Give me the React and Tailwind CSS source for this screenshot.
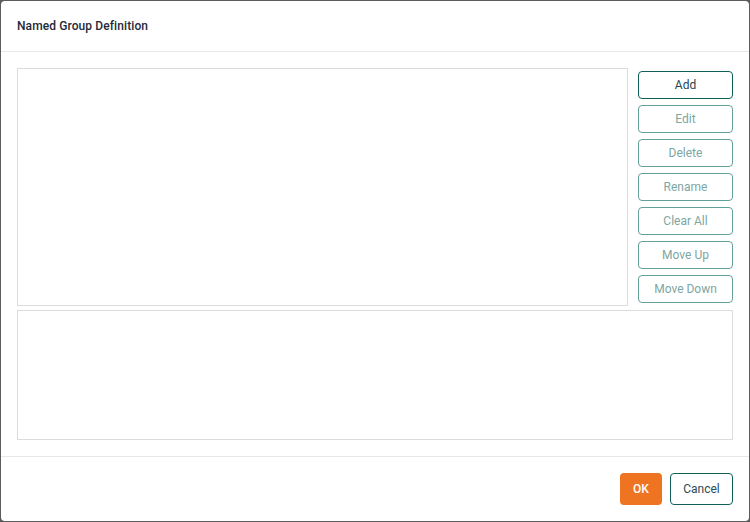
import React from 'react';

const actions = ['Add', 'Edit', 'Delete', 'Rename', 'Clear All', 'Move Up', 'Move Down'];

export default function App() {
    return (
        <div className="w-[750px] h-[522px] bg-[#5c5c5c] pt-px pl-px pr-px pb-px" style={{ fontFamily: 'Roboto, "Noto Sans", sans-serif' }}>
            <div className="h-full bg-white rounded-[4px] flex flex-col overflow-hidden">
                {/* Header */}
                <div className="h-[51px] flex items-center px-4 border-b border-[#e6e8eb] flex-shrink-0">
                    <h2 className="text-[12px] font-medium text-[#1f2937] tracking-[0.1px]">Named Group Definition</h2>
                </div>

                {/* Body */}
                <div className="px-4 pt-4 pb-4 flex flex-col gap-[4px] border-b border-[#e6e8eb]">
                    <div className="flex gap-[10px]">
                        <div className="flex-1 h-[238px] border border-[#dcdcdc]"></div>
                        <div className="w-[95px] pt-[3px] flex flex-col gap-[6px]">
                            {actions.map((label, i) => (
                                <button
                                    key={label}
                                    className={
                                        i === 0
                                            ? 'h-[28px] rounded-[4px] border border-[#0f5f58] text-[12px] text-[#1f4652]'
                                            : 'h-[28px] rounded-[4px] border border-[#62a099] text-[12px] text-[#7ea6a2]'
                                    }
                                >
                                    {label}
                                </button>
                            ))}
                        </div>
                    </div>
                    <div className="h-[130px] border border-[#dcdcdc]"></div>
                </div>

                {/* Footer */}
                <div className="flex-1 flex items-center justify-end gap-[8px] px-4">
                    <button className="h-[32px] w-[42px] rounded-[4px] bg-[#ee7421] text-white text-[12px] font-medium">OK</button>
                    <button className="h-[32px] w-[63px] rounded-[4px] border border-[#0f5f58] text-[12px] text-[#2c4a56]">Cancel</button>
                </div>
            </div>
        </div>
    );
}
